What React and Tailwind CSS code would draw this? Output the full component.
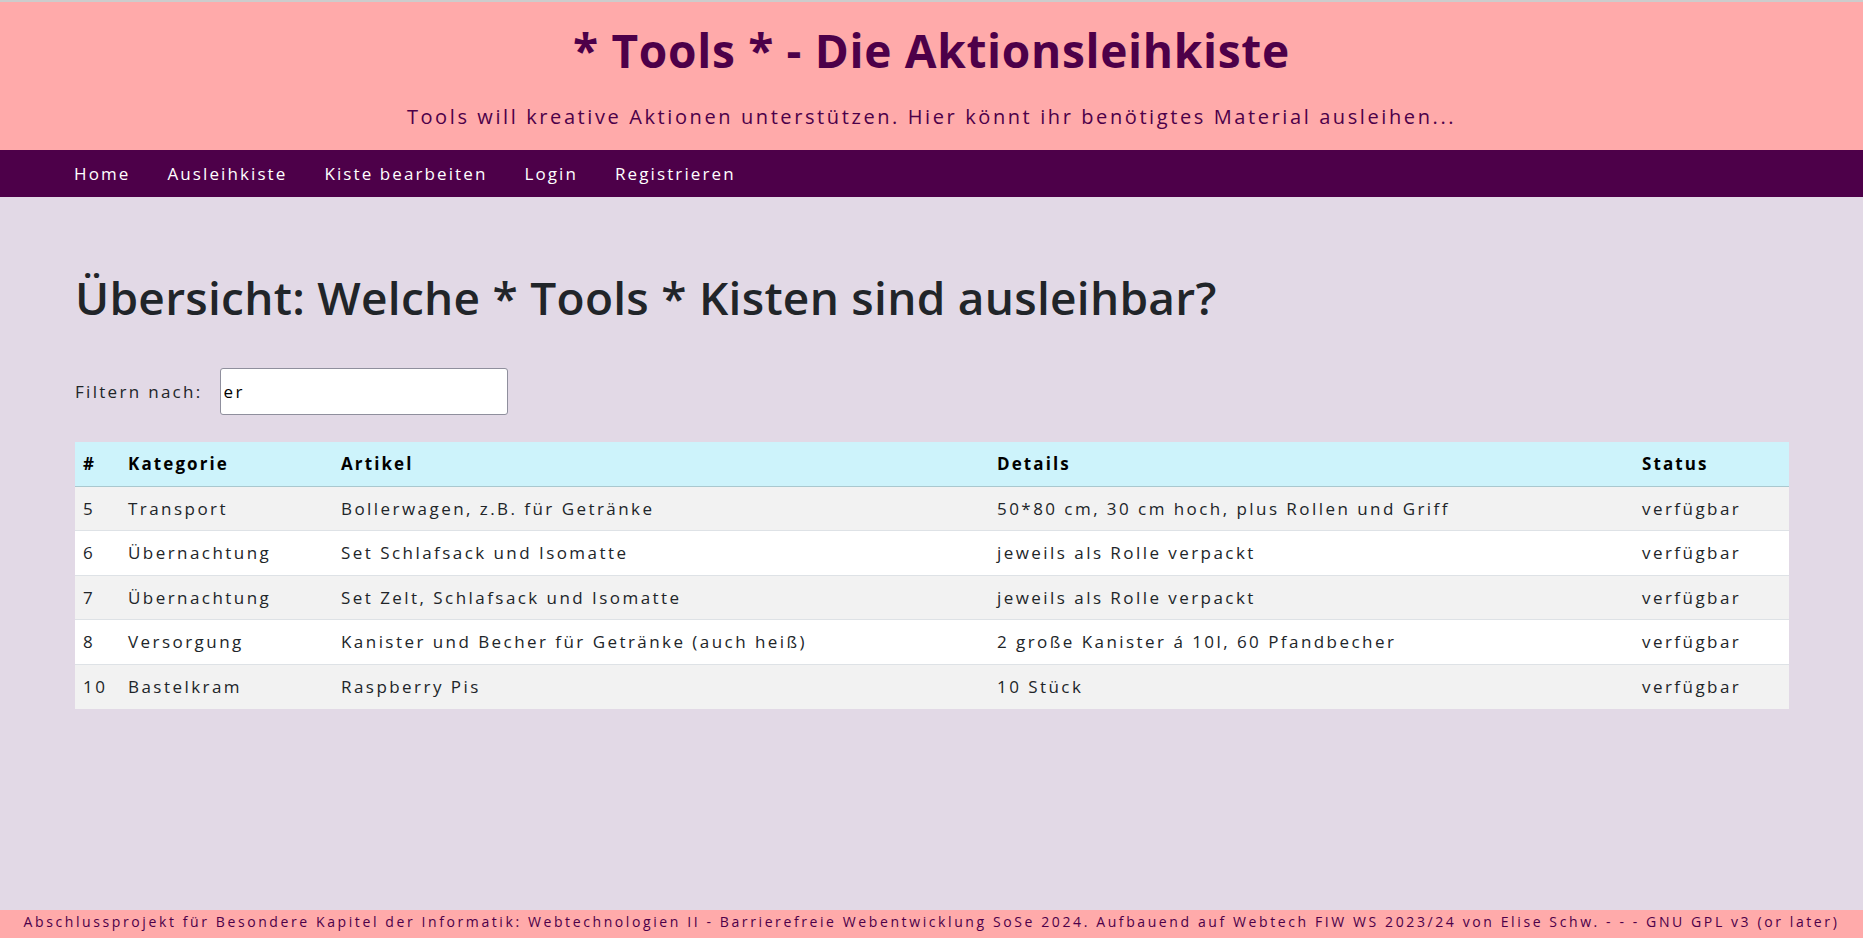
const rows = [
  ["5", "Transport", "Bollerwagen, z.B. für Getränke", "50*80 cm, 30 cm hoch, plus Rollen und Griff", "verfügbar"],
  ["6", "Übernachtung", "Set Schlafsack und Isomatte", "jeweils als Rolle verpackt", "verfügbar"],
  ["7", "Übernachtung", "Set Zelt, Schlafsack und Isomatte", "jeweils als Rolle verpackt", "verfügbar"],
  ["8", "Versorgung", "Kanister und Becher für Getränke (auch heiß)", "2 große Kanister á 10l, 60 Pfandbecher", "verfügbar"],
  ["10", "Bastelkram", "Raspberry Pis", "10 Stück", "verfügbar"],
];

const navItems = ["Home", "Ausleihkiste", "Kiste bearbeiten", "Login", "Registrieren"];

export default function App() {
  return (
    <div className="flex min-h-screen flex-col bg-[#e2d9e6] font-['Open_Sans',sans-serif] text-[#212529]">
      <header className="flex h-[150px] flex-col items-center border-t-2 border-[#cccccc] bg-[#ffaaaa] pt-[25px] text-[#4d0049]">
        <h1 className="text-[46px] font-bold leading-none tracking-[0.7px]">* Tools * - Die Aktionsleihkiste</h1>
        <p className="mt-[34px] text-[20px] leading-none tracking-[2.6px]">
          Tools will kreative Aktionen unterstützen. Hier könnt ihr benötigtes Material ausleihen...
        </p>
      </header>

      <nav className="flex h-[47px] items-center gap-[37px] bg-[#4d0049] px-[74px] text-[17px] tracking-[2.1px] text-white">
        {navItems.map((item) => (
          <a key={item} href="#" className="leading-none">
            {item}
          </a>
        ))}
      </nav>

      <main className="px-[75px] pt-[77px]">
        <h2 className="text-[46px] font-semibold leading-none tracking-[0.28px]">
          Übersicht: Welche * Tools * Kisten sind ausleihbar?
        </h2>

        <div className="mt-[48px] flex items-center gap-[17px]">
          <label htmlFor="filter" className="text-[17px] tracking-[2.3px]">
            Filtern nach:
          </label>
          <input
            id="filter"
            type="text"
            defaultValue="er"
            className="h-[47px] w-[288px] rounded-[3px] border border-[#8f8f9d] bg-white px-[3px] text-[17px] tracking-[2.3px] text-black outline-none"
          />
        </div>

        <table className="mt-[27px] w-[1714px] table-fixed border-collapse text-left text-[17px] tracking-[2.45px]">
          <colgroup>
            <col className="w-[45px]" />
            <col className="w-[213px]" />
            <col className="w-[656px]" />
            <col className="w-[645px]" />
            <col className="w-[155px]" />
          </colgroup>
          <thead>
            <tr className="h-[44px] border-b border-[#a9c8cf] bg-[#cdf3fb] tracking-[2.1px] text-black">
              <th className="px-[8px] font-bold">#</th>
              <th className="px-[8px] font-bold">Kategorie</th>
              <th className="px-[8px] font-bold">Artikel</th>
              <th className="px-[8px] font-bold">Details</th>
              <th className="px-[8px] font-bold">Status</th>
            </tr>
          </thead>
          <tbody>
            {rows.map((row, i) => (
              <tr
                key={row[0]}
                className={`h-[44.6px] border-b border-[#dee2e6] last:border-b-0 ${i % 2 === 0 ? "bg-[#f2f2f2]" : "bg-white"}`}
              >
                {row.map((cell, j) => (
                  <td key={j} className="whitespace-nowrap px-[8px]">
                    {cell}
                  </td>
                ))}
              </tr>
            ))}
          </tbody>
        </table>
      </main>

      <footer className="mt-auto flex h-[28px] items-center justify-center whitespace-nowrap bg-[#ffaaaa] pb-[6px] text-[14px] tracking-[2.6px] text-[#4d0049]">
        Abschlussprojekt für Besondere Kapitel der Informatik: Webtechnologien II - Barrierefreie Webentwicklung SoSe 2024. Aufbauend auf Webtech FIW WS 2023/24 von Elise Schw. - - - GNU GPL v3 (or later)
      </footer>
    </div>
  );
}
